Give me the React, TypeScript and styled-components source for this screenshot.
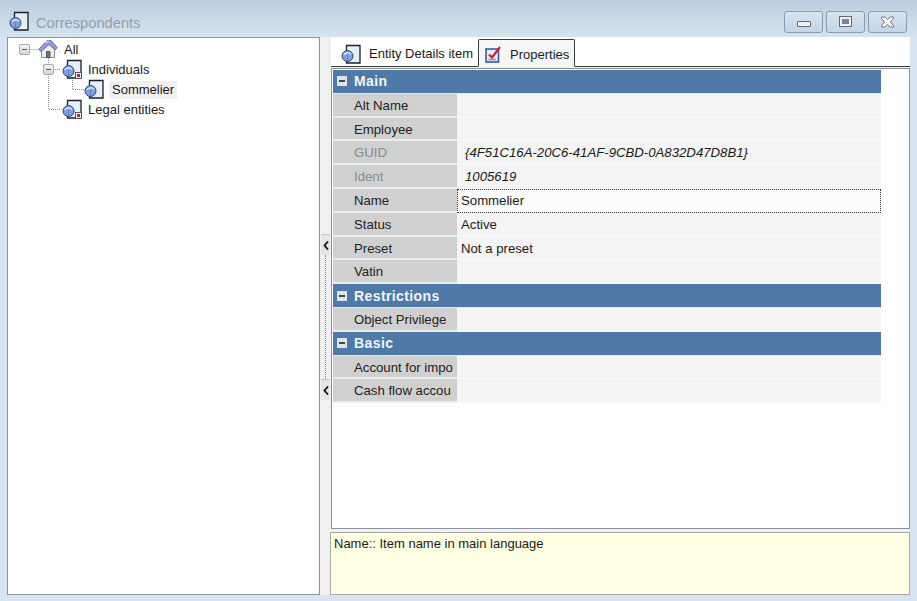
import { FC } from 'react';
import styled, { createGlobalStyle } from 'styled-components';

type PropertyRow = {
  label: string;
  value?: string;
  disabled?: boolean;
  focused?: boolean;
};

type PropertyGroup = {
  title: string;
  rows: PropertyRow[];
};

const groups: PropertyGroup[] = [
  {
    title: 'Main',
    rows: [
      { label: 'Alt Name' },
      { label: 'Employee' },
      {
        label: 'GUID',
        value: '{4F51C16A-20C6-41AF-9CBD-0A832D47D8B1}',
        disabled: true,
      },
      { label: 'Ident', value: '1005619', disabled: true },
      { label: 'Name', value: 'Sommelier', focused: true },
      { label: 'Status', value: 'Active' },
      { label: 'Preset', value: 'Not a preset' },
      { label: 'Vatin' },
    ],
  },
  {
    title: 'Restrictions',
    rows: [{ label: 'Object Privilege' }],
  },
  {
    title: 'Basic',
    rows: [{ label: 'Account for impo' }, { label: 'Cash flow accou' }],
  },
];

const EntityIcon: FC<{ badge?: boolean }> = ({ badge = false }) => (
  <IconSvg width="20" height="20" viewBox="0 0 20 20">
    <path d="M5.500 1.500h13.500v17.500H5.500z" fill="#e6eff8" stroke="#18212c" strokeWidth="1.300" />
    <circle cx="6.500" cy="12" r="5.500" fill="#7f9fe0" stroke="#2f4a6b" />
    <path d="M3 11c1-2.300 5-2.800 7-.8" fill="none" stroke="#dbe6fb" strokeWidth="1.300" />
    <path d="M6.500 11v6" stroke="#5f7fc0" />
    {badge && (
      <>
        <rect x="13.500" y="13.500" width="6" height="6" fill="#f7f4f6" stroke="#4a5462" />
        <rect x="15" y="15" width="3" height="3" fill="#c4204a" />
      </>
    )}
  </IconSvg>
);

const HouseIcon: FC = () => (
  <IconSvg width="20" height="20" viewBox="0 0 20 20">
    <path d="M3.500 9v9.500h13V9L10 4z" fill="#f0f0ea" stroke="#8a8a8c" />
    <path d="M.8 10.500 9 1.500h4l6.200 7-2 2.500L11 5.500 3 12.500z" fill="#979ade" stroke="#686ba8" />
    <path d="M7 3.500l4-1.500" stroke="#c8caf2" strokeWidth="1.500" />
    <path d="M8.500 12.500h3.500v6H8.500z" fill="#6f7078" stroke="#55565c" />
  </IconSvg>
);

const PropertiesIcon: FC = () => (
  <IconSvg width="17" height="17" viewBox="0 0 17 17">
    <rect x="1" y="3" width="12.500" height="13" fill="#e8edf9" stroke="#2f4fa8" strokeWidth="1.500" />
    <path d="M4 8.500l3 3L15 1" fill="none" stroke="#d21f35" strokeWidth="2.200" />
    <path d="M3.500 13.500h7.500" stroke="#7f95d0" strokeWidth="1.500" />
  </IconSvg>
);

const TreeConnectors: FC = () => (
  <ConnectorSvg width="120" height="90" viewBox="0 0 120 90">
    <path
      d="M21.500 11.500h9M40.500 20v6M45 31.500h8M40.500 36v35.500h13M64.500 40v11.500h12"
      fill="none"
      stroke="#8c8c8c"
      strokeDasharray="1 1"
    />
  </ConnectorSvg>
);

const SplitterChevron: FC = () => (
  <IconSvg width="6" height="9" viewBox="0 0 6 9">
    <path d="M5 .5 1.500 4.500 5 8.500" fill="none" stroke="#111" strokeWidth="1.800" />
  </IconSvg>
);

const App: FC = () => (
  <>
    <GlobalStyle />
    <Window>
      <TitleBar>
        <EntityIcon />
        <TitleText>Correspondents</TitleText>
        <WindowButtons>
          <WindowButton aria-label="Minimize">
            <MinimizeGlyph />
          </WindowButton>
          <WindowButton aria-label="Restore">
            <RestoreGlyph />
          </WindowButton>
          <WindowButton aria-label="Close">
            <CloseGlyph width="15" height="12" viewBox="0 0 15 12">
              <path
                d="M1.500 1h3.500l2.500 2.500L10 1h3.500v1.500L10.500 6l3 3.500V11H10L7.500 8.500 5 11H1.500V9.500l3-3.500-3-3.500z"
                fill="#f1f3f6"
                stroke="#6d7886"
              />
            </CloseGlyph>
          </WindowButton>
        </WindowButtons>
      </TitleBar>

      <Content>
        <TreePanel>
          <TreeConnectors />
          <TreeRow $indent={11}>
            <Expander />
            <HouseIcon />
            <TreeLabel>All</TreeLabel>
          </TreeRow>
          <TreeRow $indent={35}>
            <Expander />
            <EntityIcon badge />
            <TreeLabel>Individuals</TreeLabel>
          </TreeRow>
          <TreeRow $indent={76}>
            <EntityIcon />
            <TreeLabel $selected>Sommelier</TreeLabel>
          </TreeRow>
          <TreeRow $indent={54}>
            <EntityIcon badge />
            <TreeLabel>Legal entities</TreeLabel>
          </TreeRow>
        </TreePanel>

        <Splitter>
          <SplitterArrow>
            <SplitterChevron />
          </SplitterArrow>
          <SplitterDots />
          <SplitterArrow>
            <SplitterChevron />
          </SplitterArrow>
        </Splitter>

        <RightPane>
          <TabStrip>
            <Tab>
              <EntityIcon />
              <span>Entity Details item</span>
            </Tab>
            <Tab $active>
              <PropertiesIcon />
              <span>Properties</span>
            </Tab>
          </TabStrip>

          <GridFrame>
            <Grid>
              {groups.map(group => (
                <div key={group.title}>
                  <GroupHeader>
                    <GroupToggle />
                    {group.title}
                  </GroupHeader>
                  {group.rows.map(row => (
                    <Row key={row.label}>
                      <RowLabel $disabled={row.disabled}>{row.label}</RowLabel>
                      <RowValue $disabled={row.disabled} $focused={row.focused}>
                        {row.value}
                      </RowValue>
                    </Row>
                  ))}
                </div>
              ))}
            </Grid>
          </GridFrame>

          <Description>Name:: Item name in main language</Description>
        </RightPane>
      </Content>
    </Window>
  </>
);

export default App;

const GlobalStyle = createGlobalStyle`
  html, body {
    margin: 0;
    padding: 0;
    width: 917px;
    height: 601px;
    overflow: hidden;
  }

  body {
    font-family: 'Liberation Sans', Arial, sans-serif;
    font-size: 13px;
    color: #1a1a1a;
  }
`;

const Window = styled.div`
  width: 917px;
  height: 601px;
  display: flex;
  flex-direction: column;
  background: #d8e4f2;
`;

const TitleBar = styled.div`
  height: 37px;
  flex: none;
  display: flex;
  align-items: center;
  padding: 5px 10px 0 9px;
  box-sizing: border-box;
  background: linear-gradient(#bccdde, #d6e3f1);
`;

const TitleText = styled.span`
  margin: 3px 0 0 7px;
  color: #949fab;
  font-size: 14.700px;
`;

const WindowButtons = styled.div`
  margin: 1px 0 0 auto;
  display: flex;
  gap: 3px;
`;

const WindowButton = styled.div`
  width: 39px;
  height: 22px;
  box-sizing: border-box;
  display: flex;
  align-items: center;
  justify-content: center;
  border: 1px solid #8b9bb0;
  border-radius: 3px;
  background: linear-gradient(#d9e4f0, #c6d4e4);
`;

const MinimizeGlyph = styled.span`
  width: 14px;
  height: 6px;
  margin-top: 5px;
  box-sizing: border-box;
  border: 1px solid #5f6b78;
  border-radius: 1px;
  background: #eef1f5;
`;

const RestoreGlyph = styled.span`
  width: 11px;
  height: 9px;
  box-sizing: border-box;
  border: 2px solid #eef1f5;
  outline: 1px solid #5f6b78;
  background: #7d8896;
`;

const CloseGlyph = styled.svg`
  display: block;
`;

const Content = styled.div`
  flex: 1;
  min-height: 0;
  display: flex;
  padding: 0 7px 6px;
`;

const TreePanel = styled.div`
  position: relative;
  width: 313px;
  flex: none;
  box-sizing: border-box;
  padding-top: 1px;
  background: #fff;
  border: 1px solid #8a929c;
`;

const ConnectorSvg = styled.svg`
  position: absolute;
  top: 0;
  left: 0;
  pointer-events: none;
`;

const TreeRow = styled.div<{ $indent: number }>`
  position: relative;
  height: 20px;
  display: flex;
  align-items: center;
  padding-left: ${p => p.$indent}px;
`;

const Expander = styled.span`
  position: relative;
  width: 11px;
  height: 11px;
  margin-right: 8px;
  flex: none;
  box-sizing: border-box;
  border: 1px solid #a4a7b0;
  border-radius: 2px;
  background: linear-gradient(#f4f4f6, #d5d7dd);

  &::after {
    content: '';
    position: absolute;
    left: 2px;
    top: 4px;
    width: 5px;
    height: 1px;
    background: #555;
  }
`;

const IconSvg = styled.svg`
  display: block;
  flex: none;
`;

const TreeLabel = styled.span<{ $selected?: boolean }>`
  margin-top: 2px;
  margin-left: ${p => (p.$selected ? 5 : 6)}px;
  padding: ${p => (p.$selected ? '1px 3px' : '0')};
  background: ${p => (p.$selected ? '#f0f0f0' : 'transparent')};
  line-height: 16px;
`;

const Splitter = styled.div`
  width: 10px;
  flex: none;
  display: flex;
  flex-direction: column;
  padding-top: 197px;
  padding-bottom: 195px;
  box-sizing: border-box;
  background: #f0f0f0;
`;

const SplitterArrow = styled.span`
  height: 21px;
  flex: none;
  margin-left: 1px;
  display: flex;
  align-items: center;
  justify-content: center;
  background: #e6e6e6;
  border-top: 1px solid #c4c4c4;
  box-sizing: border-box;
`;

const SplitterDots = styled.span`
  flex: 1;
  margin-left: 5px;
  border-left: 1px dotted #5a86c4;
`;

const RightPane = styled.div`
  flex: 1;
  min-width: 0;
  display: flex;
  flex-direction: column;
  background: #f0f0f0;
`;

const TabStrip = styled.div`
  height: 30px;
  flex: none;
  display: flex;
  align-items: flex-end;
  box-sizing: border-box;
  padding-left: 10px;
  margin-left: 1px;
  background: #fff;
  border-bottom: 1px solid #3c3c3c;
`;

const Tab = styled.div<{ $active?: boolean }>`
  height: ${p => (p.$active ? 28 : 26)}px;
  display: flex;
  align-items: center;
  gap: 8px;
  box-sizing: border-box;
  padding: ${p => (p.$active ? '2px 5px 0 6px' : '1px 5px 0 0')};
  margin-bottom: ${p => (p.$active ? -1 : 0)}px;
  background: ${p => (p.$active ? '#f6f6f6' : '#fff')};
  border: ${p => (p.$active ? '1px solid #3c3c3c' : 'none')};
  border-bottom: ${p => (p.$active ? '1px solid #f6f6f6' : 'none')};
  border-radius: ${p => (p.$active ? '2px 2px 0 0' : '0')};
`;

const GridFrame = styled.div`
  flex: 1;
  min-height: 0;
  margin: 1px 0 0 1px;
  padding: 1px;
  background: #fff;
  border: 1px solid #8a929c;
`;

const Grid = styled.div`
  width: 548px;
`;

const GroupHeader = styled.div`
  height: 23.800px;
  display: flex;
  align-items: center;
  gap: 7px;
  padding-left: 4px;
  box-sizing: border-box;
  background: #4f79a6;
  color: #f2f6fa;
  font-size: 14px;
  font-weight: bold;
  letter-spacing: 0.400px;
  border-bottom: 1px solid #dfe6ee;
`;

const GroupToggle = styled.span`
  position: relative;
  width: 10px;
  height: 10px;
  box-sizing: border-box;
  background: #dfe3e8;

  &::after {
    content: '';
    position: absolute;
    left: 2px;
    top: 4px;
    width: 6px;
    height: 2px;
    background: #3c4650;
  }
`;

const Row = styled.div`
  height: 23.800px;
  display: flex;
  box-sizing: border-box;
`;

const RowLabel = styled.div<{ $disabled?: boolean }>`
  width: 124px;
  flex: none;
  box-sizing: border-box;
  padding-left: 21px;
  white-space: nowrap;
  font-size: 13.200px;
  line-height: 23px;
  background: #d0d0d0;
  border-bottom: 2px solid #ececec;
  color: ${p => (p.$disabled ? '#8a8a8a' : '#222')};
`;

const RowValue = styled.div<{ $disabled?: boolean; $focused?: boolean }>`
  flex: 1;
  min-width: 0;
  box-sizing: border-box;
  padding-left: ${p => (p.$disabled ? 8 : 4)}px;
  font-size: 13.200px;
  line-height: 23px;
  white-space: nowrap;
  background: ${p => (p.$focused ? '#fbfbfb' : '#f4f4f4')};
  border-bottom: 1px solid #fbfbfb;
  outline: ${p => (p.$focused ? '1px dotted #333' : 'none')};
  outline-offset: -1px;
  font-style: ${p => (p.$disabled ? 'italic' : 'normal')};
`;

const Description = styled.div`
  height: 63px;
  flex: none;
  margin-top: 3px;
  box-sizing: border-box;
  padding: 2px 3px;
  background: #ffffe3;
  border: 1px solid #a8a8a8;
  line-height: 18px;
`;
